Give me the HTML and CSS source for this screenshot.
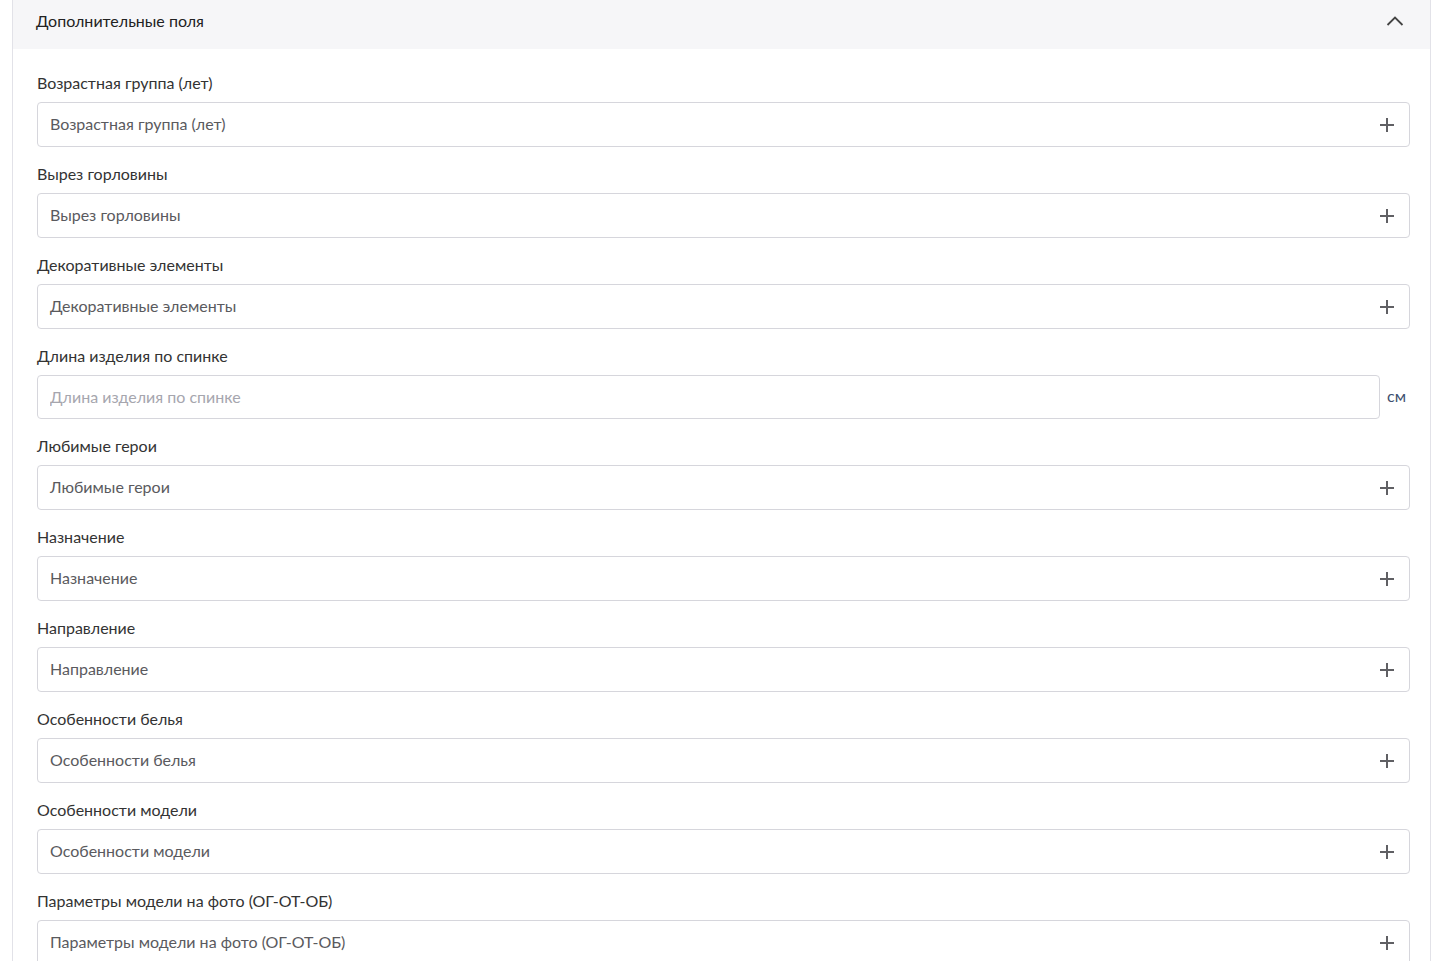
FILE: index.html
```html
<!DOCTYPE html>
<html>
  <head>
    <title>Дополнительные поля</title>
    <link rel="stylesheet" href="styles.css">
  </head>
  <body>
    <section class="panel">
      <div class="panel-header">
        <span>Дополнительные поля</span>
        <svg class="chevron" width="18" height="12" viewBox="0 0 18 12"><path d="M1.5 10 L9 2.5 L16.5 10" fill="none" stroke="#444" stroke-width="1.8"/></svg>
      </div>
      <div class="panel-body">
        <div class="field">
          <label>Возрастная группа (лет)</label>
          <div class="select"><span>Возрастная группа (лет)</span><i class="plus"></i></div>
        </div>
        <div class="field">
          <label>Вырез горловины</label>
          <div class="select"><span>Вырез горловины</span><i class="plus"></i></div>
        </div>
        <div class="field">
          <label>Декоративные элементы</label>
          <div class="select"><span>Декоративные элементы</span><i class="plus"></i></div>
        </div>
        <div class="field">
          <label>Длина изделия по спинке</label>
          <div class="unit-row">
            <input class="text-input" type="text" placeholder="Длина изделия по спинке">
            <span class="unit">см</span>
          </div>
        </div>
        <div class="field">
          <label>Любимые герои</label>
          <div class="select"><span>Любимые герои</span><i class="plus"></i></div>
        </div>
        <div class="field">
          <label>Назначение</label>
          <div class="select"><span>Назначение</span><i class="plus"></i></div>
        </div>
        <div class="field">
          <label>Направление</label>
          <div class="select"><span>Направление</span><i class="plus"></i></div>
        </div>
        <div class="field">
          <label>Особенности белья</label>
          <div class="select"><span>Особенности белья</span><i class="plus"></i></div>
        </div>
        <div class="field">
          <label>Особенности модели</label>
          <div class="select"><span>Особенности модели</span><i class="plus"></i></div>
        </div>
        <div class="field">
          <label>Параметры модели на фото (ОГ-ОТ-ОБ)</label>
          <div class="select"><span>Параметры модели на фото (ОГ-ОТ-ОБ)</span><i class="plus"></i></div>
        </div>
      </div>
    </section>
  </body>
</html>
```

FILE: styles.css
```css
body {
  margin: 0;
  padding: 0;
  background: #fff;
  font-family: Lato, "Open Sans", sans-serif;
  color: #333;
}
.panel {
  margin-left: 12px;
  width: 1417px;
  border-left: 1px solid #e2e2e8;
  border-right: 1px solid #e2e2e8;
  min-height: 961px;
}
.panel-header {
  height: 49px;
  background: #f6f6f8;
  display: flex;
  align-items: center;
  justify-content: space-between;
  padding: 0 26px 8px 23px;
  font-size: 16px;
  color: #222;
  box-sizing: border-box;
}
.chevron {
  display: block;
  margin-top: 1px;
}
.panel-body {
  padding: 24px 20px 0 24px;
}
.field {
  margin-bottom: 17px;
}
.field label {
  display: block;
  font-size: 16px;
  line-height: 19px;
  margin-bottom: 10px;
  color: #333;
}
.select {
  height: 45px;
  box-sizing: border-box;
  border: 1px solid #d6d6dc;
  border-radius: 4px;
  display: flex;
  align-items: center;
  justify-content: space-between;
  padding: 0 15px 2px 12px;
  font-size: 16px;
  color: #5a5a5e;
}
.plus {
  position: relative;
  width: 14px;
  height: 14px;
  margin-top: 2px;
}
.plus::before,
.plus::after {
  content: "";
  position: absolute;
  background: #606064;
}
.plus::before {
  left: 0;
  right: 0;
  top: 6px;
  height: 2px;
}
.plus::after {
  top: 0;
  bottom: 0;
  left: 6px;
  width: 2px;
}
.unit-row {
  display: flex;
  align-items: center;
}
.text-input {
  flex: 1;
  height: 44px;
  box-sizing: border-box;
  border: 1px solid #d6d6dc;
  border-radius: 4px;
  padding: 0 12px 2px;
  font-family: inherit;
  font-size: 16px;
  color: #333;
  outline: none;
}
.text-input::placeholder {
  color: #a6a6ae;
}
.unit {
  width: 30px;
  text-align: center;
  font-size: 16px;
  color: #3d4f6e;
  padding: 0 0 3px 3px;
  box-sizing: border-box;
}
```
